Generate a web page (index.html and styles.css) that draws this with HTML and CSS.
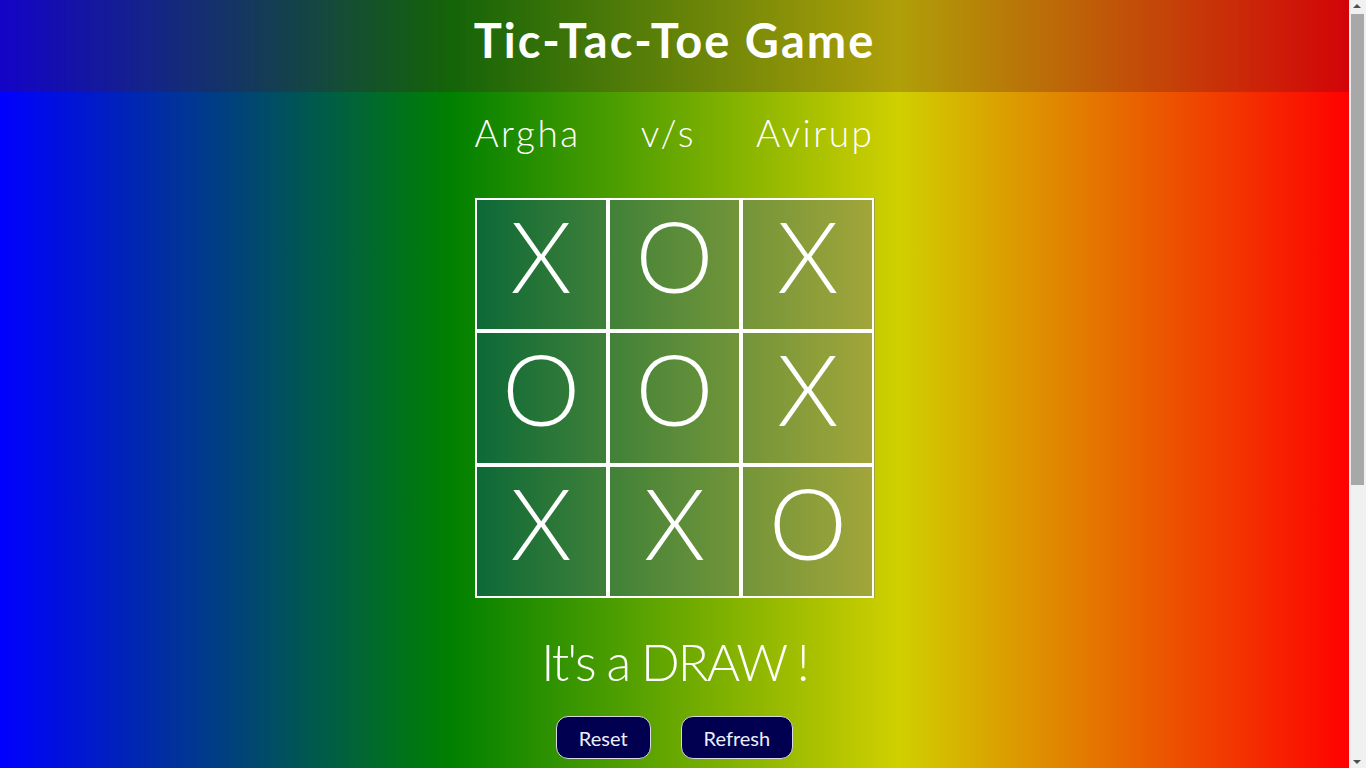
FILE: index.html
```html
<!DOCTYPE html>
<html lang="en">
<head>
<meta charset="utf-8">
<title>Tic-Tac-Toe Game</title>
<link rel="stylesheet" href="styles.css">
</head>
<body>
<div class="page">
  <header class="topbar">
    <h1 class="title">Tic-Tac-Toe Game</h1>
  </header>
  <main class="game">
    <div class="players">
      <span class="player">Argha</span>
      <span class="versus">v/s</span>
      <span class="player">Avirup</span>
    </div>
    <div class="board">
      <div class="cell"><span class="mark">X</span></div>
      <div class="cell"><span class="mark">O</span></div>
      <div class="cell"><span class="mark">X</span></div>
      <div class="cell"><span class="mark">O</span></div>
      <div class="cell"><span class="mark">O</span></div>
      <div class="cell"><span class="mark">X</span></div>
      <div class="cell"><span class="mark">X</span></div>
      <div class="cell"><span class="mark">X</span></div>
      <div class="cell"><span class="mark">O</span></div>
    </div>
    <p class="result">It's a DRAW !</p>
    <div class="actions">
      <button class="btn">Reset</button>
      <button class="btn">Refresh</button>
    </div>
  </main>
</div>
<div class="scrollbar" aria-hidden="true">
  <span class="arrow arrow-up"></span>
  <span class="thumb"></span>
  <span class="arrow arrow-down"></span>
</div>
</body>
</html>
```
FILE: styles.css
```css
* { box-sizing: border-box; }
html, body { margin: 0; padding: 0; }
body {
  font-family: "Lato", "Open Sans", sans-serif;
  color: #ffffff;
  background: #ff0000;
}
.page {
  width: calc(100vw - 17px);
  min-height: 1194px;
  background: linear-gradient(to right, #0000ff 0%, #008000 33.4%, #d0d000 66.6%, #ff0000 100%);
}
.topbar {
  height: 92px;
  background: rgba(80, 15, 30, 0.25);
  display: flex;
  align-items: center;
  justify-content: center;
}
.title {
  margin: 0;
  font-size: 47px;
  font-weight: 700;
  letter-spacing: 2px;
  line-height: 1;
  padding-bottom: 12px;
}
.game {
  display: flex;
  flex-direction: column;
  align-items: center;
}
.players {
  width: 400px;
  display: flex;
  justify-content: space-between;
  margin-top: 16px;
  font-size: 37px;
  line-height: 50px;
  font-weight: 300;
  letter-spacing: 2.5px;
}
.board {
  margin-top: 40px;
  width: 400px;
  height: 400px;
  display: grid;
  grid-template-columns: repeat(3, minmax(0, 1fr));
  grid-template-rows: repeat(3, minmax(0, 1fr));
  background: linear-gradient(to right, #0c6937 0%, #5a8c39 50%, #a3a63a 100%);
}
.cell {
  border: 2px solid #ffffff;
  display: flex;
  align-items: flex-start;
  justify-content: center;
  padding-top: 15px;
}
.mark {
  font-size: 99px;
  font-weight: 300;
  line-height: 79px;
}
.result {
  margin: 32px 0 0;
  font-size: 51px;
  line-height: 64px;
  font-weight: 300;
  letter-spacing: -2px;
}
.actions {
  margin-top: 22px;
  display: flex;
  gap: 30px;
}
.btn {
  font-family: "Lato", "Open Sans", sans-serif;
  font-size: 20px;
  color: #eeeef8;
  background: #010050;
  border: 1px solid #d8d8e0;
  border-radius: 12px;
  height: 43px;
  padding: 0 22px;
  cursor: pointer;
}
.scrollbar {
  position: fixed;
  top: 0;
  right: 0;
  width: 17px;
  height: 100vh;
  background: #f1f1f1;
}
.thumb {
  position: absolute;
  left: 2px;
  top: 14px;
  width: 13px;
  height: 471px;
  background: #a8a8a8;
}
.arrow {
  position: absolute;
  left: 4px;
  width: 0;
  height: 0;
  border-left: 4px solid transparent;
  border-right: 4px solid transparent;
}
.arrow-up {
  top: 4px;
  border-bottom: 4px solid #505050;
}
.arrow-down {
  bottom: 4px;
  border-top: 4px solid #505050;
}
```
